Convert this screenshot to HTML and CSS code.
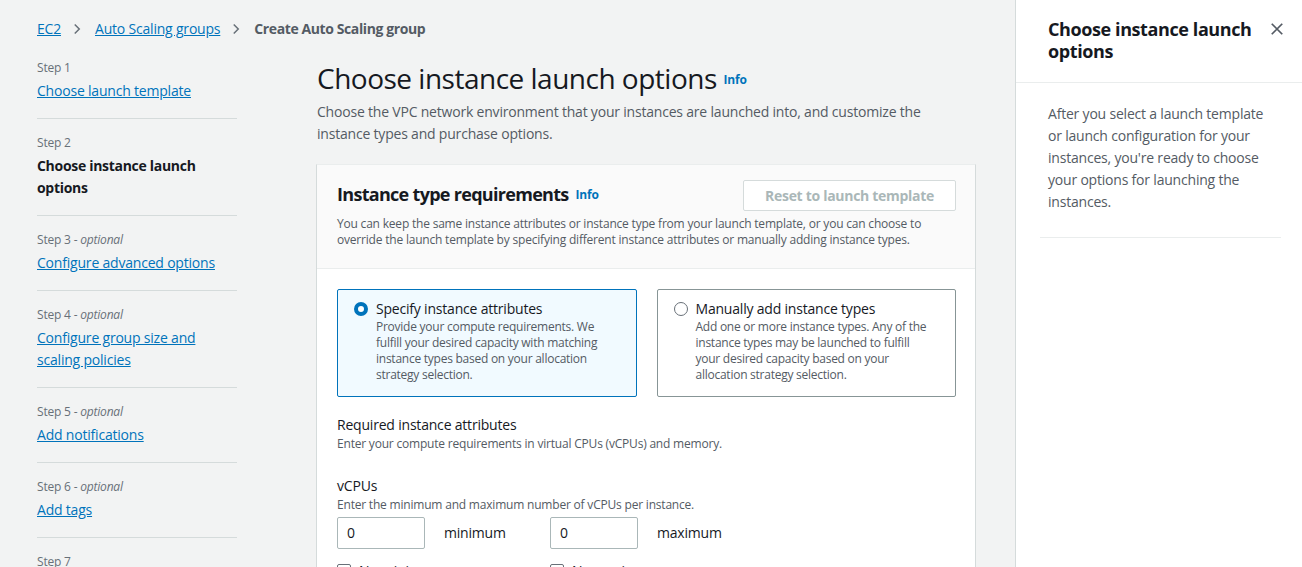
FILE: index.html
```html
<!DOCTYPE html>
<html>
<head>
<meta charset="utf-8">
<link rel="stylesheet" href="styles.css">
</head>
<body>
<div class="app">
  <div class="main">
    <nav class="crumbs">
      <a href="#" class="link">EC2</a>
      <svg class="chev" viewBox="0 0 16 16"><path d="M5 2l6 6-6 6" fill="none" stroke="#687078" stroke-width="2"/></svg>
      <a href="#" class="link">Auto Scaling groups</a>
      <svg class="chev" viewBox="0 0 16 16"><path d="M5 2l6 6-6 6" fill="none" stroke="#687078" stroke-width="2"/></svg>
      <span class="crumb-current">Create Auto Scaling group</span>
    </nav>
    <div class="layout">
      <ul class="steps">
        <li class="step">
          <div class="step-label">Step 1</div>
          <a href="#" class="link step-link">Choose launch template</a>
        </li>
        <li class="step">
          <div class="step-label">Step 2</div>
          <div class="step-current">Choose instance launch options</div>
        </li>
        <li class="step">
          <div class="step-label">Step 3 - <i>optional</i></div>
          <a href="#" class="link step-link">Configure advanced options</a>
        </li>
        <li class="step">
          <div class="step-label">Step 4 - <i>optional</i></div>
          <a href="#" class="link step-link">Configure group size and scaling policies</a>
        </li>
        <li class="step">
          <div class="step-label">Step 5 - <i>optional</i></div>
          <a href="#" class="link step-link">Add notifications</a>
        </li>
        <li class="step">
          <div class="step-label">Step 6 - <i>optional</i></div>
          <a href="#" class="link step-link">Add tags</a>
        </li>
        <li class="step">
          <div class="step-label">Step 7</div>
          <a href="#" class="link step-link">Review</a>
        </li>
      </ul>
      <div class="content">
        <h1 class="title">Choose instance launch options <a href="#" class="info">Info</a></h1>
        <p class="lead">Choose the VPC network environment that your instances are launched into, and customize the instance types and purchase options.</p>
        <section class="card">
          <header class="card-head">
            <div class="card-row">
              <h2 class="card-title">Instance type requirements <a href="#" class="info">Info</a></h2>
              <button class="btn" disabled>Reset to launch template</button>
            </div>
            <p class="card-desc">You can keep the same instance attributes or instance type from your launch template, or you can choose to override the launch template by specifying different instance attributes or manually adding instance types.</p>
          </header>
          <div class="card-body">
            <div class="tiles">
              <div class="tile tile-selected">
                <span class="radio radio-on"></span>
                <div class="tile-text">
                  <div class="tile-title">Specify instance attributes</div>
                  <div class="tile-desc">Provide your compute requirements. We<br>fulfill your desired capacity with matching<br>instance types based on your allocation<br>strategy selection.</div>
                </div>
              </div>
              <div class="tile">
                <span class="radio"></span>
                <div class="tile-text">
                  <div class="tile-title">Manually add instance types</div>
                  <div class="tile-desc">Add one or more instance types. Any of the<br>instance types may be launched to fulfill<br>your desired capacity based on your<br>allocation strategy selection.</div>
                </div>
              </div>
            </div>
            <div class="field first-field">
              <div class="field-label">Required instance attributes</div>
              <div class="field-desc">Enter your compute requirements in virtual CPUs (vCPUs) and memory.</div>
            </div>
            <div class="field vcpu-field">
              <div class="field-label">vCPUs</div>
              <div class="field-desc">Enter the minimum and maximum number of vCPUs per instance.</div>
              <div class="range">
                <div class="range-col">
                  <div class="range-line">
                    <input class="input" type="text" value="0">
                    <span class="range-label">minimum</span>
                  </div>
                  <label class="check"><span class="box"></span>No minimum</label>
                </div>
                <div class="range-col">
                  <div class="range-line">
                    <input class="input" type="text" value="0">
                    <span class="range-label">maximum</span>
                  </div>
                  <label class="check"><span class="box"></span>No maximum</label>
                </div>
              </div>
            </div>
          </div>
        </section>
      </div>
    </div>
  </div>
  <aside class="panel">
    <div class="panel-head">
      <h2 class="panel-title">Choose instance launch options</h2>
      <svg class="close" viewBox="0 0 16 16"><path d="M2 2l12 12M14 2L2 14" fill="none" stroke="#545b64" stroke-width="2"/></svg>
    </div>
    <div class="panel-body">
      <p class="panel-text">After you select a launch template or launch configuration for your instances, you're ready to choose your options for launching the instances.</p>
    </div>
  </aside>
</div>
</body>
</html>
```

FILE: styles.css
```css
* { box-sizing: border-box; }
html, body {
  margin: 0;
  padding: 0;
  height: 100%;
  overflow: hidden;
}
body {
  background: #f2f3f3;
  font-family: "Open Sans", "Noto Sans", sans-serif;
  font-size: 14px;
  line-height: 22px;
  color: #16191f;
  letter-spacing: -0.2px;
}
.app {
  display: flex;
  height: 567px;
}
.main {
  flex: 1;
  padding: 18px 39px 0 37px;
  min-width: 0;
}
.link {
  color: #0073bb;
  text-decoration: underline;
}
.crumbs {
  display: flex;
  align-items: center;
  height: 22px;
}
.chev {
  width: 12px;
  height: 12px;
  margin: 0 12px 0 10px;
}
.crumb-current {
  color: #545b64;
  font-weight: 700;
  letter-spacing: -0.4px;
}
.layout {
  display: flex;
  gap: 80px;
  margin-top: 4px;
}
.steps {
  list-style: none;
  margin: 0;
  padding: 0;
  width: 200px;
  flex: none;
}
.step {
  padding: 16px 0;
  border-bottom: 1px solid #d5dbdb;
}
.step-label {
  font-size: 12px;
  line-height: 16px;
  color: #687078;
  margin-bottom: 4px;
}
.step-label i {
  font-style: italic;
}
.step-current {
  font-weight: 700;
  letter-spacing: -0.3px;
}
.content {
  flex: 1;
  min-width: 0;
}
.title {
  margin: 16px 0 0;
  font-size: 28px;
  line-height: 36px;
  font-weight: 400;
  color: #16191f;
  letter-spacing: -0.5px;
}
.info {
  font-size: 12px;
  font-weight: 700;
  color: #0073bb;
  text-decoration: none;
  vertical-align: middle;
  position: relative;
  top: -2px;
  letter-spacing: -0.2px;
}
.lead {
  margin: 1px 0 0;
  color: #545b64;
}
.card {
  margin-top: 19px;
  margin-left: -1px;
  background: #fff;
  border: 1px solid #d5dbdb;
  border-top-color: #eaeded;
  border-bottom: none;
  height: 420px;
}
.card-head {
  background: #fafafa;
  padding: 15px 19px 20px 20px;
  border-bottom: 1px solid #eaeded;
}
.card-row {
  display: flex;
  align-items: center;
  justify-content: space-between;
}
.card-title {
  margin: 0;
  font-size: 18px;
  line-height: 22px;
  font-weight: 700;
  letter-spacing: -0.7px;
}
.card-title .info {
  top: -1px;
  margin-left: 3px;
  letter-spacing: -0.2px;
}
.btn {
  font-family: inherit;
  font-size: 14px;
  font-weight: 700;
  letter-spacing: -0.3px;
  color: #aab7b8;
  background: #fff;
  border: 1px solid #d5dbdb;
  border-radius: 2px;
  height: 31px;
  width: 213px;
  padding: 0;
}
.card-desc {
  margin: 5px 0 0;
  font-size: 12px;
  line-height: 16px;
  color: #545b64;
}
.card-body {
  padding: 20px 19px 0 20px;
}
.tiles {
  display: grid;
  grid-template-columns: 1fr 1fr;
  gap: 20px;
}
.tile {
  display: flex;
  align-items: flex-start;
  border: 1px solid #879596;
  border-radius: 2px;
  padding: 9px 4px 13px 16px;
}
.tile-selected {
  border-color: #0073bb;
  background: #f1faff;
}
.radio {
  flex: none;
  width: 14px;
  height: 14px;
  border-radius: 50%;
  border: 1px solid #687078;
  background: #fff;
  margin: 3px 8px 0 0;
}
.radio-on {
  border: 4px solid #0073bb;
}
.tile-title {
  line-height: 20px;
}
.tile-desc {
  font-size: 12px;
  line-height: 16px;
  color: #545b64;
  letter-spacing: -0.25px;
  white-space: nowrap;
}
.field-label {
  line-height: 22px;
}
.field-desc {
  font-size: 12px;
  line-height: 16px;
  color: #545b64;
}
.first-field {
  margin-top: 17px;
}
.vcpu-field {
  margin-top: 23px;
}
.range {
  display: flex;
  gap: 20px;
  margin-top: 4px;
}
.range-col {
  width: 193px;
}
.range-line {
  display: flex;
  align-items: center;
  gap: 19px;
}
.input {
  width: 88px;
  height: 32px;
  border: 1px solid #aab7b8;
  border-radius: 2px;
  padding: 0 9px;
  font-family: inherit;
  font-size: 14px;
  color: #16191f;
}
.range-label {
  color: #16191f;
}
.check {
  display: flex;
  align-items: center;
  gap: 8px;
  margin-top: 11px;
}
.box {
  width: 14px;
  height: 14px;
  border: 1px solid #687078;
  border-radius: 2px;
  background: #fff;
}
.panel {
  width: 287px;
  flex: none;
  background: #fff;
  border-left: 1px solid #d5dbdb;
}
.panel-head {
  display: flex;
  align-items: flex-start;
  justify-content: space-between;
  padding: 18px 18px 20px 32px;
  border-bottom: 1px solid #eaeded;
}
.panel-title {
  margin: 0;
  font-size: 18px;
  line-height: 22px;
  font-weight: 700;
  letter-spacing: -0.4px;
  width: 215px;
}
.close {
  width: 14px;
  height: 14px;
  margin-top: 4px;
}
.panel-body {
  padding: 20px 21px 0 24px;
}
.panel-text {
  margin: 0;
  padding: 0 8px 24px;
  color: #545b64;
  border-bottom: 1px solid #eaeded;
}
```
